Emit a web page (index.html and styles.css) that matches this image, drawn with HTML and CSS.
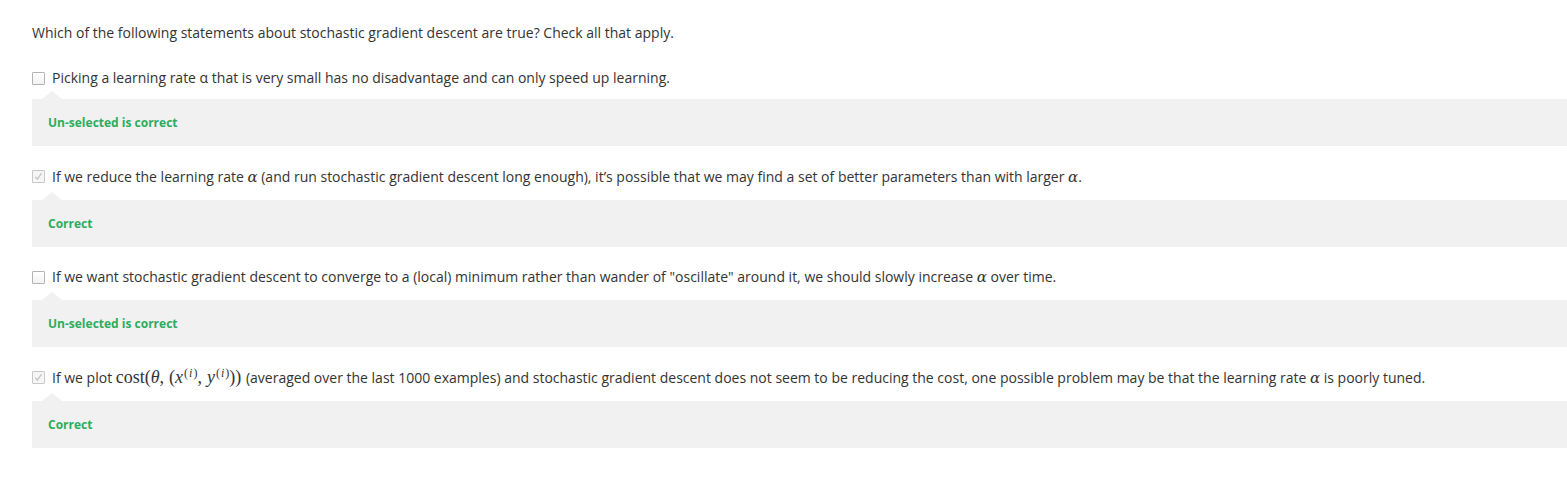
FILE: index.html
```html
<!DOCTYPE html>
<html>
<head>
<meta charset="utf-8">
<link rel="stylesheet" href="styles.css">
</head>
<body>
<div class="quiz">
  <p class="question">Which of the following statements about stochastic gradient descent are true? Check all that apply.</p>

  <div class="option">
    <div class="row plain">
      <span class="box"></span>
      <span class="label">Picking a learning rate α that is very small has no disadvantage and can only speed up learning.</span>
    </div>
    <div class="feedback"><span class="ok">Un-selected is correct</span></div>
  </div>

  <div class="option">
    <div class="row">
      <span class="box checked"><svg viewBox="0 0 13 13" width="13" height="13"><path d="M3.3 6.8 L5.4 9.2 L9.6 3.2" fill="none" stroke="#c4c4c4" stroke-width="1.3"/></svg></span>
      <span class="label">If we reduce the learning rate <i class="m">α</i> (and run stochastic gradient descent long enough), it’s possible that we may find a set of better parameters than with larger <i class="m">α</i>.</span>
    </div>
    <div class="feedback"><span class="ok">Correct</span></div>
  </div>

  <div class="option">
    <div class="row">
      <span class="box"></span>
      <span class="label">If we want stochastic gradient descent to converge to a (local) minimum rather than wander of "oscillate" around it, we should slowly increase <i class="m">α</i> over time.</span>
    </div>
    <div class="feedback"><span class="ok">Un-selected is correct</span></div>
  </div>

  <div class="option">
    <div class="row">
      <span class="box checked"><svg viewBox="0 0 13 13" width="13" height="13"><path d="M3.3 6.8 L5.4 9.2 L9.6 3.2" fill="none" stroke="#c4c4c4" stroke-width="1.3"/></svg></span>
      <span class="label">If we plot <span class="math"><span class="mr">cost</span><span class="mr">(</span><i>θ</i><span class="mr cm">,</span><span class="mr">(</span><i class="xv">x</i><sup><span class="mr">(</span><i>i</i><span class="mr">)</span></sup><span class="mr cm">,</span><i class="xv">y</i><sup><span class="mr">(</span><i>i</i><span class="mr">)</span></sup><span class="mr">))</span></span> (averaged over the last 1000 examples) and stochastic gradient descent does not seem to be reducing the cost, one possible problem may be that the learning rate <i class="m">α</i> is poorly tuned.</span>
    </div>
    <div class="feedback"><span class="ok">Correct</span></div>
  </div>
</div>
</body>
</html>
```

FILE: styles.css
```css
html, body {
  margin: 0;
  padding: 0;
  background: #ffffff;
}
body {
  font-family: "Open Sans", "Liberation Sans", sans-serif;
  font-size: 14px;
  color: #333333;
}
.quiz {
  padding: 23px 0 0 32px;
}
.question {
  margin: 0 0 25px 0;
  line-height: 20px;
}
.option {
  margin-bottom: 18.5px;
}
.row {
  display: flex;
  align-items: center;
  height: 24px;
  line-height: 24px;
  margin-bottom: 11px;
}
.row.plain {
  height: 20px;
  line-height: 20px;
}
.box {
  flex: none;
  width: 11px;
  height: 11px;
  border: 1px solid #b4b4b4;
  border-radius: 1px;
  background: linear-gradient(#ffffff, #f2f2f2);
  margin-right: 7px;
  position: relative;
}
.box svg {
  position: absolute;
  left: -1px;
  top: -1px;
}
.box.checked {
  border-color: #c8c8c8;
  background: #f6f6f6;
}
.label {
  white-space: nowrap;
}
.m {
  font-family: "DejaVu Serif", "Liberation Serif", serif;
  font-style: italic;
  font-size: 15px;
}
.math {
  font-family: "Liberation Serif", "DejaVu Serif", serif;
  font-size: 18px;
  margin-right: 1px;
}
.math i {
  font-style: italic;
}
.math .cm {
  margin-right: 5px;
}
.math .xv {
  margin-right: 1px;
}
.math sup {
  font-size: 12px;
  vertical-align: 6px;
  line-height: 0;
}
.math sup i {
  margin: 0 1px;
}
.feedback {
  position: relative;
  background: #f1f1f1;
  height: 47px;
  display: flex;
  align-items: center;
  padding-left: 16px;
}
.feedback::before {
  content: "";
  position: absolute;
  left: 10px;
  top: -8px;
  border-left: 10px solid transparent;
  border-right: 10px solid transparent;
  border-bottom: 8px solid #f1f1f1;
}
.ok {
  color: #2aad5f;
  font-weight: 700;
  font-size: 12px;
}
```
